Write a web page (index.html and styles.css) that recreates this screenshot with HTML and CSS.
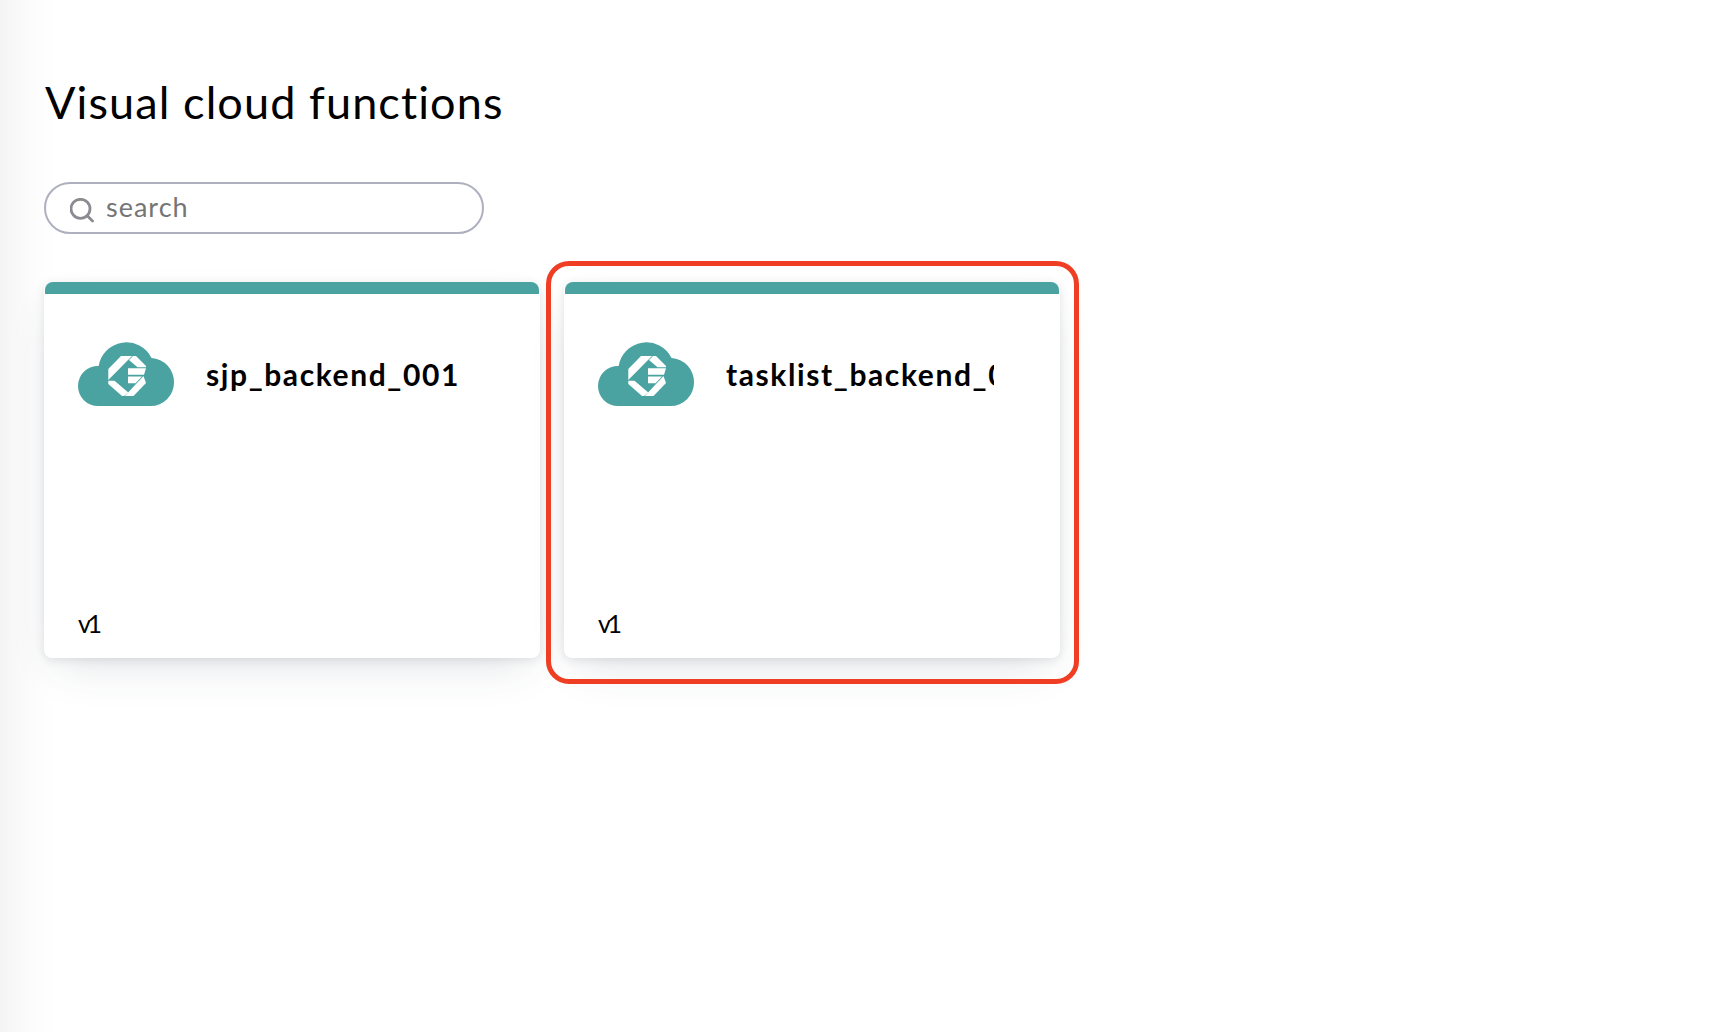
FILE: index.html
```html
<!DOCTYPE html>
<html lang="en">
<head>
<meta charset="utf-8">
<title>Visual cloud functions</title>
<link rel="stylesheet" href="styles.css">
</head>
<body>
<svg class="defs" width="0" height="0" aria-hidden="true">
  <symbol id="cloud" viewBox="0 0 96 64">
    <path fill="#4aa3a1" d="M20 64A20 20 0 0 1 0 44A20 20 0 0 1 20.700 24A28 28 0 0 1 73.500 16A24 24 0 0 1 96 40A23.500 23.500 0 0 1 72.500 64Z"/>
    <g fill="#fff">
      <path d="M43 14H54L30.300 38V27Z"/>
      <path d="M55 14H58L68 24V25.300H59.500L51 18Z"/>
      <path d="M50 26.200H68L66 32.800H50Z"/>
      <path d="M50 34.500H64L57.500 41.300H50Z"/>
      <path d="M30.300 38.800H36.500L50.300 50.500L46 54H44L30.300 42Z"/>
      <path d="M65.500 34L68 41L55.500 54H46.800Z"/>
    </g>
  </symbol>
</svg>
<main class="page">
  <h1 class="title">Visual cloud functions</h1>
  <label class="search">
    <svg class="search-icon" viewBox="0 0 24 25"><circle cx="10.500" cy="10.800" r="9.500"/><path d="M17.500 18L22.500 23"/></svg>
    <input class="search-input" type="text" placeholder="search">
  </label>
  <section class="cards">
    <article class="card">
      <div class="card-head"><svg class="cloud"><use href="#cloud"/></svg><h2 class="name">sjp_backend_001</h2></div>
      <p class="version">v1</p>
    </article>
    <article class="card selected">
      <div class="card-head"><svg class="cloud"><use href="#cloud"/></svg><h2 class="name">tasklist_backend_001</h2></div>
      <p class="version">v1</p>
    </article>
  </section>
</main>
</body>
</html>
```

FILE: styles.css
```css
* { box-sizing: border-box; }
body { margin: 0; background: #fff; color: #000; font-family: Lato, "Open Sans", sans-serif; }
.defs { display: block; height: 0; }
.page {
  height: 1032px;
  padding: 74px 0 0 44px;
  background: linear-gradient(90deg, #f4f4f4 0, #f9f9f9 18px, #fdfdfd 38px, #fff 56px);
}
.title { margin: 0; padding-left: 1px; height: 56px; line-height: 56px; font-size: 45px; font-weight: 400; letter-spacing: 1.1px; white-space: nowrap; }
.search {
  display: flex; align-items: center; width: 440px; height: 52px; margin-top: 52px;
  padding-left: 24px; border: 2px solid #aeb0be; border-radius: 26px; background: #fff;
}
.search-icon { width: 24px; height: 25px; margin-top: 4px; fill: none; stroke: #8b8b91; stroke-width: 2.800; stroke-linecap: round; }
.search-input { width: 330px; margin: -2px 0 0 12px; padding: 0; border: 0; outline: 0; background: none; font: 400 27px/36px Lato, sans-serif; letter-spacing: 1px; }
.search-input::placeholder { color: #757575; opacity: 1; }
.cards { display: flex; gap: 24px; margin-top: 48px; }
.card {
  position: relative; display: flex; flex-direction: column; justify-content: space-between;
  width: 496px; height: 376px; padding: 60px 34px 17px; border-radius: 8px; background: #fff;
  box-shadow: 0 2px 10px rgba(50, 60, 80, .13), 0 18px 44px -14px rgba(50, 60, 80, .16);
}
.card::before { content: ""; position: absolute; inset: 0 1px auto; height: 12px; border-radius: 8px 8px 0 0; background: #4aa3a1; }
.selected::after { content: ""; position: absolute; inset: -21px -19px -26px -18px; border: 5px solid #ef3e23; border-radius: 23px; }
.card-head { display: flex; align-items: center; gap: 32px; }
.cloud { flex: none; width: 96px; height: 64px; }
.name { width: 268px; margin: 0; overflow: hidden; white-space: nowrap; font-size: 30px; line-height: 40px; font-weight: 700; letter-spacing: 1.6px; }
.version { margin: 0; font-size: 25px; line-height: 36px; letter-spacing: -3.5px; }
```
